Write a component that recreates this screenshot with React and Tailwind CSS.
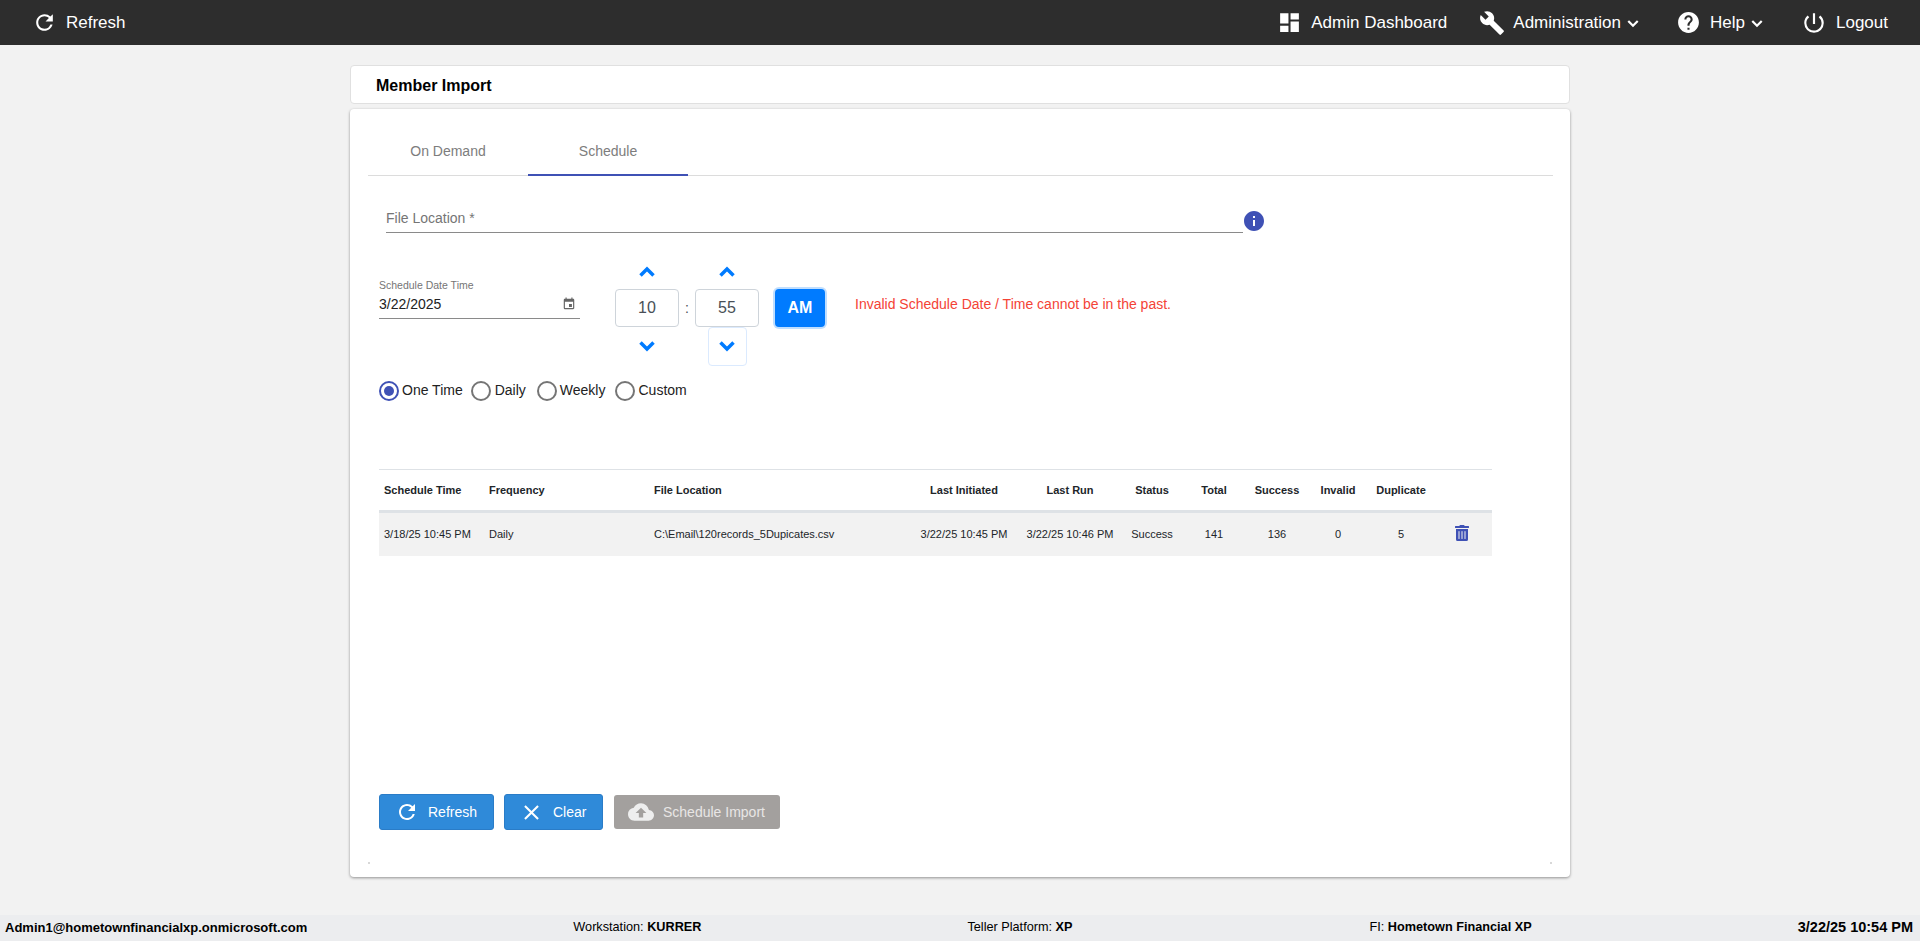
import {
  MdRefresh,
  MdDashboard,
  MdBuild,
  MdHelp,
  MdPowerSettingsNew,
  MdInfo,
  MdEvent,
  MdClear,
  MdCloudUpload,
} from "react-icons/md";
import { FaTrashAlt } from "react-icons/fa";

const columns = [
  { label: "Schedule Time", value: "3/18/25 10:45 PM", cls: "w-[105px] pl-[5px] text-left" },
  { label: "Frequency", value: "Daily", cls: "w-[166px] pl-[5px] text-left" },
  { label: "File Location", value: "C:\\Email\\120records_5Dupicates.csv", cls: "w-[262px] pl-[4px] text-left" },
  { label: "Last Initiated", value: "3/22/25 10:45 PM", cls: "w-[104px] text-center" },
  { label: "Last Run", value: "3/22/25 10:46 PM", cls: "w-[108px] text-center" },
  { label: "Status", value: "Success", cls: "w-[56px] text-center" },
  { label: "Total", value: "141", cls: "w-[68px] text-center" },
  { label: "Success", value: "136", cls: "w-[58px] text-center" },
  { label: "Invalid", value: "0", cls: "w-[64px] text-center" },
  { label: "Duplicate", value: "5", cls: "w-[62px] text-center" },
];

function Chevron({ up, w = 16, h = 11, sw = 3.5 }) {
  return (
    <svg width={w} height={h} viewBox="0 0 16 11" fill="none" stroke="currentColor" strokeWidth={sw}>
      <path d={up ? "M1.5 9.5 L8 3 L14.5 9.5" : "M1.5 1.5 L8 8 L14.5 1.5"} />
    </svg>
  );
}

function NavItem({ icon, label, caret, className = "" }) {
  return (
    <div className={"flex items-center text-white text-[17px] " + className}>
      {icon}
      <span>{label}</span>
      {caret && (
        <span className="ml-[6px] mt-[2px]">
          <Chevron w={12} h={8} sw={3} />
        </span>
      )}
    </div>
  );
}

function Radio({ label, checked, wide, className = "" }) {
  return (
    <label className={"flex items-center text-[14px] text-[#222] " + className}>
      <span
        className={
          "flex items-center justify-center w-[20px] h-[20px] rounded-full border-2 " +
          (checked ? "border-[#3f51b5]" : "border-[#757575]")
        }
      >
        {checked && <span className="w-[10px] h-[10px] rounded-full bg-[#3f51b5]" />}
      </span>
      <span className={wide ? "ml-[4px]" : "ml-[3px]"}>{label}</span>
    </label>
  );
}

function TimeField({ value, focused }) {
  return (
    <div className="flex flex-col items-center w-[64px]">
      <div className="h-[37px] flex items-center justify-center text-[#007bff] pt-[1px]">
        <Chevron up />
      </div>
      <div className="w-[64px] h-[38px] rounded-[4px] border border-[#ced4da] flex items-center justify-center text-[16px] text-[#495057]">
        {value}
      </div>
      <div
        className={
          "w-[39px] h-[39px] flex items-center justify-center text-[#007bff] rounded-[4px] border " +
          (focused ? "border-[#dbeafe]" : "border-transparent")
        }
      >
        <Chevron />
      </div>
    </div>
  );
}

export default function App() {
  return (
    <div className="min-h-screen flex flex-col bg-[#f2f2f2] font-['Liberation_Sans',Arial,sans-serif]">
      <header className="h-[45px] bg-[#2d2d2d] flex items-center shrink-0">
        <div className="flex items-center text-white text-[17px] ml-[32px]">
          <MdRefresh size={25} />
          <span className="ml-[9px]">Refresh</span>
        </div>
        <div className="ml-auto flex items-center mr-[32px]">
          <NavItem icon={<MdDashboard size={25} className="mr-[9px]" />} label="Admin Dashboard" />
          <NavItem className="ml-[32px]" icon={<MdBuild size={26} className="mr-[8px]" />} label="Administration" caret />
          <NavItem className="ml-[37px]" icon={<MdHelp size={25} className="mr-[9px]" />} label="Help" caret />
          <NavItem className="ml-[38px]" icon={<MdPowerSettingsNew size={26} className="mr-[9px]" />} label="Logout" />
        </div>
      </header>

      <main className="flex-1 flex flex-col items-center">
        <div className="mt-[20px] w-[1220px] h-[39px] bg-white rounded-[4px] border border-[#e0e0e0] flex items-center pl-[25px] pt-[2px] text-[16px] font-bold text-black">
          Member Import
        </div>

        <div className="relative mt-[5px] w-[1220px] h-[768px] bg-white rounded-[4px] shadow-[0_1px_3px_rgba(0,0,0,0.4)] pt-[18px] pl-[18px] pr-[17px]">
          <div className="flex h-[49px] border-b border-[#dcdcdc]">
            <div className="w-[160px] h-[49px] flex items-center justify-center text-[14px] text-[#7d7d7d]">
              On Demand
            </div>
            <div className="w-[160px] h-[49px] flex items-center justify-center pt-[2px] text-[14px] text-[#7d7d7d] border-b-2 border-[#3f51b5]">
              Schedule
            </div>
          </div>

          <div className="pl-[11px]">
            <div className="mt-[30px] ml-[7px] flex items-center">
              <div className="w-[857px] h-[27px] border-b border-[#8a8a8a] text-[14px] text-[#757575] leading-[24px]">
                File Location *
              </div>
              <MdInfo size={24} className="text-[#3f51b5] mt-[3px] -ml-[1px]" />
            </div>

            <div className="mt-[19px] flex items-start">
              <div className="mt-[26px] w-[201px] h-[41px] pt-[1px] border-b border-[#8a8a8a] relative">
                <div className="text-[10.5px] leading-[12px] text-[#757575]">Schedule Date Time</div>
                <div className="mt-[3px] text-[14px] leading-[20px] text-[#222]">3/22/2025</div>
                <MdEvent size={14} className="absolute right-[4px] top-[19px] text-[#666]" />
              </div>
              <div className="ml-[35px]">
                <TimeField value="10" />
              </div>
              <div className="w-[16px] mt-[37px] h-[38px] flex items-center justify-center text-[14px] text-[#495057]">:</div>
              <TimeField value="55" focused />
              <button className="ml-[16px] mt-[37px] w-[50px] h-[38px] rounded-[4px] bg-[#007bff] text-white text-[16px] font-bold shadow-[0_0_0_2px_rgba(0,123,255,0.25)]">
                AM
              </button>
              <div className="ml-[30px] mt-[42px] text-[14px] leading-[20px] text-[#f44336]">
                Invalid Schedule Date / Time cannot be in the past.
              </div>
            </div>

            <div className="mt-[14px] flex items-center">
              <Radio label="One Time" checked />
              <Radio label="Daily" wide className="ml-[8px]" />
              <Radio label="Weekly" className="ml-[11px]" />
              <Radio label="Custom" className="ml-[10px]" />
            </div>

            <div className="mt-[68px] w-[1113px] border-t border-[#dee2e6]">
              <div className="flex items-center h-[40px] border-b-[3px] border-[#dee2e6] box-content text-[11px] font-bold text-[#212529]">
                {columns.map((c) => (
                  <div key={c.label} className={c.cls}>
                    {c.label}
                  </div>
                ))}
              </div>
              <div className="flex items-center h-[43px] bg-[#f2f2f2] text-[11px] text-[#212529]">
                {columns.map((c) => (
                  <div key={c.label} className={c.cls}>
                    {c.value}
                  </div>
                ))}
                <div className="w-[60px] flex justify-center pb-[4px]">
                  <FaTrashAlt size={16} className="text-[#3f51b5]" />
                </div>
              </div>
            </div>

            <div className="mt-[238px] flex items-center">
              <button className="w-[115px] h-[36px] rounded-[3px] bg-[#2f8ad9] border border-[#2a7cc7] text-white text-[14px] flex items-center pl-[15px]">
                <MdRefresh size={24} />
                <span className="ml-[9px]">Refresh</span>
              </button>
              <button className="ml-[10px] w-[99px] h-[36px] rounded-[3px] bg-[#2f8ad9] border border-[#2a7cc7] text-white text-[14px] flex items-center pl-[14px]">
                <MdClear size={25} />
                <span className="ml-[9px]">Clear</span>
              </button>
              <button className="ml-[11px] w-[166px] h-[34px] rounded-[3px] bg-[#a3a09e] text-[#e8e6e5] text-[14px] flex items-center pl-[14px]">
                <MdCloudUpload size={26} className="text-[#eeeeee]" />
                <span className="ml-[9px]">Schedule Import</span>
              </button>
            </div>
          </div>

          <span className="absolute left-[18px] bottom-[13px] w-[2px] h-[2px] bg-[#d8d8d8]" />
          <span className="absolute right-[18px] bottom-[13px] w-[2px] h-[2px] bg-[#d8d8d8]" />
        </div>
      </main>

      <footer className="h-[26px] shrink-0 bg-[#ecedef] flex items-center pl-[5px] pr-[7px] text-[12.7px] text-black">
        <span className="font-bold text-[13px]">Admin1@hometownfinancialxp.onmicrosoft.com</span>
        <span className="ml-[266px]">
          Workstation: <b>KURRER</b>
        </span>
        <span className="ml-[266px]">
          Teller Platform: <b>XP</b>
        </span>
        <span className="ml-[297px]">
          FI: <b>Hometown Financial XP</b>
        </span>
        <span className="ml-auto font-bold text-[14.5px]">3/22/25 10:54 PM</span>
      </footer>
    </div>
  );
}
